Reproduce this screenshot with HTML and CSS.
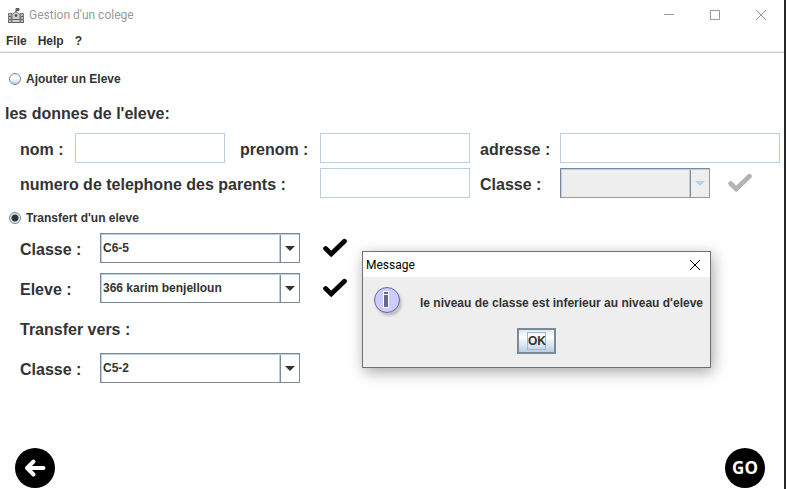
FILE: index.html
```html
<!DOCTYPE html>
<html lang="fr">
<head>
<meta charset="utf-8">
<meta name="viewport" content="width=device-width, initial-scale=1">
<title>Gestion d'un colege</title>
<link rel="stylesheet" href="styles.css">
</head>
<body>
<svg class="defs" aria-hidden="true">
  <symbol id="check" viewBox="0 0 24 20"><path d="M2.6 10.6 8.2 16 21.4 3.2" fill="none" stroke="currentColor" stroke-width="4.8" stroke-linecap="round"/></symbol>
  <symbol id="arrow" viewBox="0 0 10 5"><path d="M0 0H10L5 5Z" fill="currentColor"/></symbol>
</svg>
<div class="window">
  <header class="titlebar">
    <svg class="app-icon" viewBox="0 0 16 15" aria-hidden="true">
      <path d="M.5 5.5H4V14.5H.5ZM12 5.5h3.5v9H12Z" fill="#b5b5b5" stroke="#777"/>
      <path d="M4 14.5V6.5L8 3.5l4 3v8Z" fill="#ccc" stroke="#777"/>
      <path d="M8 4V.5h3v2H8" fill="#777" stroke="#555"/>
      <path d="M1 8.5h3M1 11.5h3M12 8.5h3M12 11.5h3M4 11.5h8M0 14.5h16" stroke="#666"/>
      <circle cx="8" cy="7.5" r="1.3" fill="#444"/>
    </svg>
    <h1 class="app-title">Gestion d'un colege</h1>
    <button class="win-btn" type="button" aria-label="Minimize"><svg viewBox="0 0 10 10"><path d="M0 4.5H10"/></svg></button>
    <button class="win-btn" type="button" aria-label="Maximize"><svg viewBox="0 0 10 10"><path d="M.5 .5h9v9h-9Z"/></svg></button>
    <button class="win-btn" type="button" aria-label="Close"><svg viewBox="0 0 10 10"><path d="M0 0 10 10M10 0 0 10"/></svg></button>
  </header>
  <nav class="menubar">
    <button type="button">File</button>
    <button type="button">Help</button>
    <button type="button">?</button>
  </nav>
  <main class="content">
    <label class="mode mode-add"><input type="radio" name="mode">Ajouter un Eleve</label>
    <h2 class="section-title">les donnes de l'eleve:</h2>
    <div class="student-form">
      <label for="nom">nom :</label>
      <input id="nom" class="field" type="text">
      <label for="prenom">prenom :</label>
      <input id="prenom" class="field" type="text">
      <label for="adresse">adresse :</label>
      <input id="adresse" class="field field-wide" type="text">
      <label class="label-phone" for="tel">numero de telephone des parents :</label>
      <input id="tel" class="field" type="text">
      <label for="classe-add">Classe :</label>
      <div class="with-check">
        <div class="combo combo-disabled">
          <select id="classe-add" disabled><option></option></select>
          <svg class="combo-arrow"><use href="#arrow"/></svg>
        </div>
        <button class="check" type="button" aria-label="Valider" disabled><svg><use href="#check"/></svg></button>
      </div>
    </div>
    <label class="mode"><input type="radio" name="mode" checked>Transfert d'un eleve</label>
    <div class="transfer-form">
      <label for="classe-from">Classe :</label>
      <div class="combo">
        <select id="classe-from"><option>C6-5</option></select>
        <svg class="combo-arrow"><use href="#arrow"/></svg>
      </div>
      <button class="check" type="button" aria-label="Valider la classe"><svg><use href="#check"/></svg></button>
      <label for="eleve">Eleve :</label>
      <div class="combo">
        <select id="eleve"><option>366 karim benjelloun</option></select>
        <svg class="combo-arrow"><use href="#arrow"/></svg>
      </div>
      <button class="check" type="button" aria-label="Valider l'eleve"><svg><use href="#check"/></svg></button>
      <h3 class="transfer-title">Transfer vers :</h3>
      <label for="classe-to">Classe :</label>
      <div class="combo">
        <select id="classe-to"><option>C5-2</option></select>
        <svg class="combo-arrow"><use href="#arrow"/></svg>
      </div>
    </div>
  </main>
  <footer class="actions">
    <button class="round" type="button" aria-label="Retour"><svg viewBox="0 0 40 40"><path d="M28.5 20H13M18.5 13.5 12 20l6.500 6.500" fill="none" stroke="#fff" stroke-width="4" stroke-linecap="round" stroke-linejoin="round"/></svg></button>
    <button class="round" type="button">GO</button>
  </footer>
  <section class="dialog" role="dialog" aria-labelledby="dialog-title">
    <header class="dialog-bar">
      <h2 id="dialog-title">Message</h2>
      <button class="dialog-close" type="button" aria-label="Close"><svg viewBox="0 0 10 10"><path d="M0 0 10 10M10 0 0 10"/></svg></button>
    </header>
    <div class="dialog-body">
      <svg class="info" viewBox="0 0 32 32" aria-hidden="true">
        <circle class="info-shadow" cx="16" cy="16" r="13"/>
        <circle cx="14" cy="13" r="12.5" fill="#ccf" stroke="#669"/>
        <path d="M10 4h6v17h-6Z" fill="#fff"/>
        <path d="M11 5h4v2h-4ZM11 8h4v12h-4Z" fill="#669"/>
      </svg>
      <p>le niveau de classe est inferieur au niveau d'eleve</p>
    </div>
    <div class="dialog-actions"><button class="ok" type="button"><span>OK</span></button></div>
  </section>
</div>
</body>
</html>
```
FILE: styles.css
```css
* {
  box-sizing: border-box;
}

body {
  margin: 0;
  background: #fff;
  color: #333;
  font: bold 12px/16px "Liberation Sans", Arial, sans-serif;
}

h1, h2, h3, p {
  margin: 0;
}

button, input, select {
  margin: 0;
  padding: 0;
  border: 0;
  border-radius: 0;
  background: none;
  color: inherit;
  font: inherit;
}

svg {
  display: block;
}

.defs {
  position: absolute;
  width: 0;
  height: 0;
}

.window {
  position: relative;
  display: flex;
  flex-direction: column;
  min-height: 100vh;
  border-right: 2px solid #262626;
}

.titlebar {
  display: flex;
  align-items: center;
  height: 30px;
  padding-left: 8px;
}

.app-icon {
  width: 16px;
  height: 15px;
  margin-right: 5px;
}

.app-title {
  flex: 1;
  color: #999;
  font: 12px/16px Roboto, "Noto Sans", sans-serif;
}

.win-btn {
  display: flex;
  align-items: center;
  justify-content: center;
  width: 46px;
  height: 28px;
}

.win-btn svg {
  width: 10px;
  height: 10px;
  fill: none;
  stroke: #999;
}

.menubar {
  display: flex;
  gap: 11px;
  height: 23px;
  padding: 3px 6px;
  border-bottom: 1px solid #ccc;
  box-shadow: inset 0 -1px #eee;
}

.menubar button {
  height: 16px;
}

.content {
  flex: 1;
  padding-top: 8px;
}

.mode {
  display: flex;
  align-items: center;
  gap: 5px;
  height: 35px;
  padding: 5px 9px 0;
}

.mode-add {
  height: 30px;
}

.mode input {
  appearance: none;
  width: 12px;
  height: 12px;
  border: 1px solid #7a8a99;
  border-radius: 50%;
  background: linear-gradient(#e6eef6, #fff 40%, #b8cfe5);
}

.mode input:checked {
  background: radial-gradient(circle, #333 3px, #dbe6f1 4px);
}

.section-title {
  padding: 13px 5px 9px;
  font-size: 16px;
  line-height: 20px;
}

.student-form,
.transfer-form {
  display: grid;
  align-items: center;
  padding: 0 4px 0 20px;
  font-size: 16px;
  line-height: 20px;
}

.student-form {
  grid-template-columns: 55px 165px 80px 160px 80px 1fr;
  row-gap: 5px;
}

.transfer-form {
  grid-template-columns: 80px 200px 1fr;
  grid-auto-rows: 30px;
  row-gap: 10px;
}

.student-form > label,
.transfer-form > label,
.transfer-title {
  padding-top: 3px;
}

.label-phone {
  grid-column: span 3;
}

.field {
  width: 150px;
  height: 30px;
  padding: 0 4px;
  border: 1px solid #b8cfe5;
  background: #fff;
}

.field-wide {
  width: 100%;
}

.with-check {
  display: flex;
  align-items: center;
}

.with-check .combo {
  width: 150px;
}

.combo {
  display: grid;
  grid-template-columns: 1fr 18px;
  align-items: center;
  height: 30px;
  border: 1px solid #7a8a99;
  font-size: 12px;
  line-height: 16px;
}

.combo select {
  grid-area: 1 / 1 / 2 / 3;
  appearance: none;
  height: 28px;
  padding: 0 20px 0 2px;
  background:
    linear-gradient(#7a8a99, #7a8a99) right 18px top / 1px 100% no-repeat,
    linear-gradient(#b8cfe5, #b8cfe5) right 19px top / 1px 100% no-repeat;
  box-shadow: inset 1px 1px #b8cfe5;
  opacity: 1;
}

.combo-arrow {
  grid-area: 1 / 2 / 2 / 3;
  justify-self: center;
  width: 10px;
  height: 5px;
  pointer-events: none;
}

.combo-disabled {
  border-color: #7a8a99 #999 #999 #7a8a99;
  background: #eee;
  color: #b8cfe5;
}

.check {
  justify-self: start;
  width: 24px;
  height: 20px;
  margin-left: 23px;
  color: #000;
}

.check svg {
  width: 24px;
  height: 20px;
}

.with-check .check {
  margin-left: 18px;
}

.check:disabled {
  color: #b3b3b3;
}

.transfer-title {
  grid-column: 1 / -1;
  font-size: 16px;
}

.actions {
  display: flex;
  justify-content: space-between;
  padding: 0 19px 1px 15px;
}

.round {
  width: 40px;
  height: 40px;
  border-radius: 50%;
  background: #000;
  color: #fff;
  font: bold 17px/20px "Open Sans", "Noto Sans", sans-serif;
}

.dialog {
  position: absolute;
  top: 251px;
  left: 362px;
  width: 349px;
  border: 1px solid #707070;
  background: #eee;
  box-shadow: 2px 4px 14px rgba(0, 0, 0, 0.35);
}

.dialog-bar {
  display: flex;
  align-items: center;
  justify-content: space-between;
  height: 25px;
  padding: 0 10px 0 3px;
  background: #fff;
}

.dialog-bar h2 {
  color: #000;
  font: 12px/16px Roboto, "Noto Sans", sans-serif;
}

.dialog-close svg {
  width: 10px;
  height: 10px;
  fill: none;
  stroke: #000;
}

.dialog-body {
  display: flex;
  align-items: center;
  gap: 15px;
  padding: 10px 0 0 10px;
  white-space: nowrap;
}

.info {
  flex: none;
  width: 32px;
  height: 32px;
}

.info-shadow {
  fill: #999;
  opacity: 0.5;
  filter: blur(1px);
}

.dialog-actions {
  display: flex;
  justify-content: center;
  padding: 9px 0 13px;
}

.ok {
  width: 39px;
  height: 26px;
  border: 2px solid #7a8a99;
  background: linear-gradient(#dde8f3, #fff 30%, #b8cfe5);
}

.ok span {
  display: block;
  margin: 0 8px;
  border: 1px solid #a3b8cc;
}
```
